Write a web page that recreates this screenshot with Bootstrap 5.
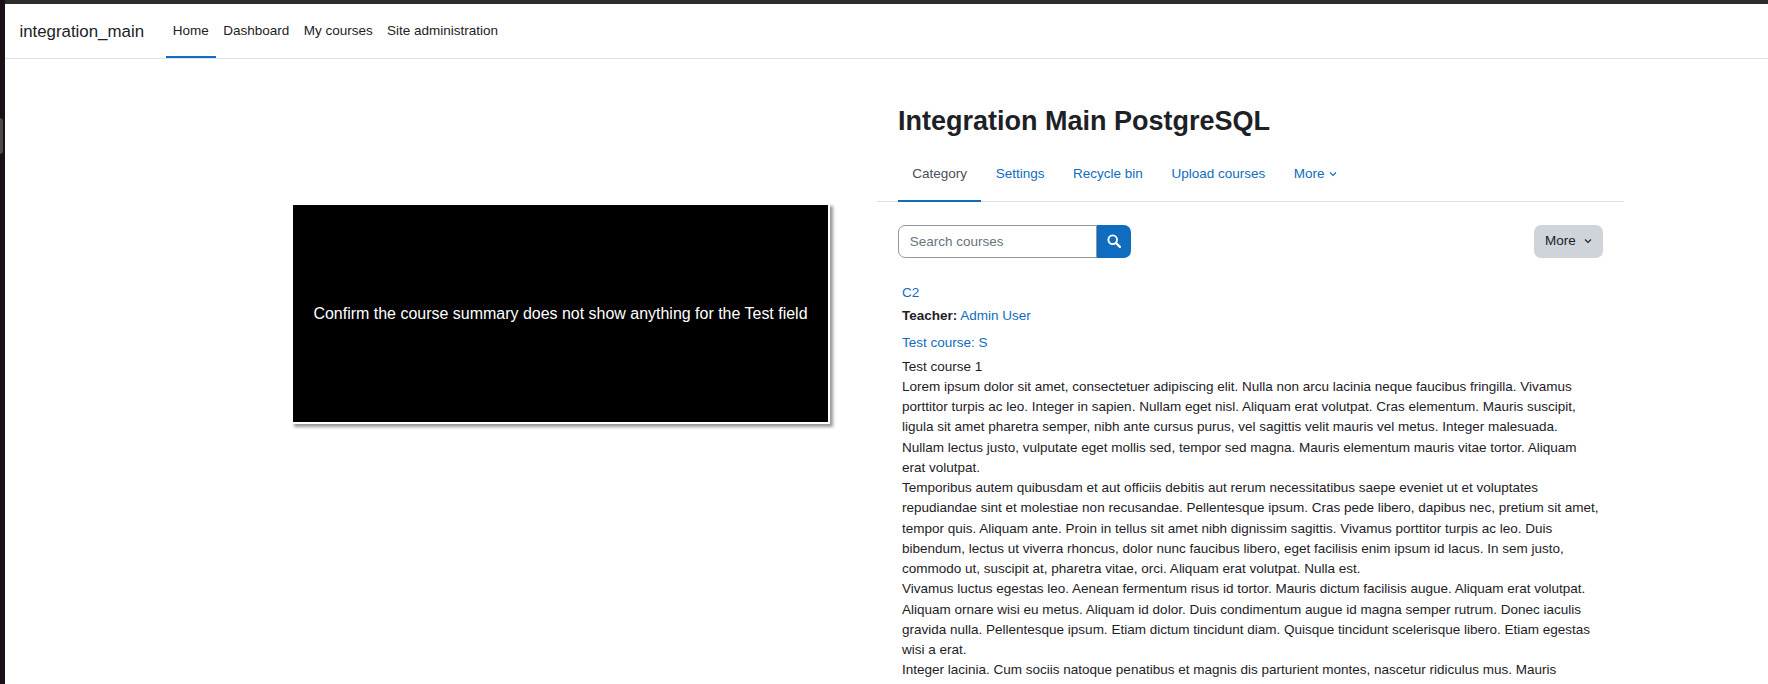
<!DOCTYPE html>
<html lang="en">
<head>
<meta charset="utf-8">
<title>Integration Main PostgreSQL</title>
<link href="https://cdn.jsdelivr.net/npm/bootstrap@5.3.0/dist/css/bootstrap.min.css" rel="stylesheet">
<style>
html,body{height:684px;overflow:hidden}
body{font-family:"Liberation Sans",Arial,sans-serif;font-size:13.5px;line-height:1.5;color:#1d2125;background:#1a1118;position:relative}
a{color:#0f6cbf;text-decoration:none}
.edge-handle{position:absolute;left:0;top:118px;width:3px;height:36px;background:#4d474a;border-radius:0 3px 3px 0}
.shell{margin-left:5px;background:#fff;height:684px;overflow:hidden;border-top:4px solid #2c2c2c}
.topbar{height:55px;padding-left:14.4px;border-bottom:1px solid #dee2e6;background:#fff}
.site-name{font-size:16.875px;color:#1d2125;margin-right:21.6px;line-height:25px}
.prim-link{display:flex;align-items:center;height:54px;padding:2px 7.2px 0;color:#1d2125;border-bottom:2px solid transparent}
.prim-link.current{border-bottom-color:#0f6cbf}
.left-side{width:286px;flex:none}
.slide-col{width:586px;flex:none;padding-top:144px}
.slide{width:539px;height:221px;background:#000;color:#fff;font-size:15.98px;border:2px solid #fff;box-sizing:border-box;box-shadow:3px 3px 3px #9a9a9a}
.main-col{width:747px;flex:none}
.page-title{font-size:27px;font-weight:700;line-height:1.2;margin:0;padding:46px 0 0 21px;color:#1d2125}
.sec-tabs{margin-top:8.6px;padding-left:21px;border-bottom:1px solid #dee2e6;height:56px}
.sec-tab{display:flex;align-items:center;height:56px;padding:2px 14.3px 0;color:#0f6cbf;white-space:nowrap;border-bottom:2px solid transparent}
.sec-tab.current{color:#495057;border-bottom-color:#0f6cbf}
.chev{margin-left:4px}
.tools{padding:23px 21px 0}
.search-box{width:233px;height:33px}
.search-box .form-control{font-size:13.5px;border:1px solid #8f959e;border-radius:7.2px 0 0 7.2px;padding:0 10.8px;height:33px;color:#495057;box-shadow:none}
.search-box .form-control::placeholder{color:#6a737b;opacity:1}
.search-go{width:34px;height:33px;background:#0f6cbf;border:0;border-radius:0 7.2px 7.2px 0;padding:0}
.more-btn{width:69px;height:33px;background:#ced4da;border:0;border-radius:7.2px;padding:0;font-size:13.5px;color:#1d2125;gap:8px}
.course-list{padding:25px 21px 0 25px}
.course-list p{margin:0}
.course-list p.teacher{margin-top:3px}
.course-list p.test-link{margin-top:7px}
.course-list p.first-line{margin-top:3px}
</style>
</head>
<body>
<div class="edge-handle"></div>
<div class="shell">
  <nav class="topbar d-flex align-items-center">
    <a class="site-name" href="#">integration_main</a>
    <div class="d-flex align-items-stretch">
      <a class="prim-link current" href="#">Home</a>
      <a class="prim-link" href="#">Dashboard</a>
      <a class="prim-link" href="#">My courses</a>
      <a class="prim-link" href="#">Site administration</a>
    </div>
  </nav>
  <div class="d-flex">
    <div class="left-side"></div>
    <div class="slide-col">
      <div class="slide d-flex align-items-center justify-content-center">Confirm the course summary does not show anything for the Test field</div>
    </div>
    <div class="main-col">
      <h1 class="page-title">Integration Main PostgreSQL</h1>
      <div class="sec-tabs d-flex">
        <a class="sec-tab current" href="#">Category</a>
        <a class="sec-tab" href="#">Settings</a>
        <a class="sec-tab" href="#">Recycle bin</a>
        <a class="sec-tab" href="#">Upload courses</a>
        <a class="sec-tab" href="#">More<svg class="chev" width="8" height="6" viewBox="0 0 8 6"><path d="M1 1.5l3 3 3-3" fill="none" stroke="currentColor" stroke-width="1.1"/></svg></a>
      </div>
      <div class="tools d-flex justify-content-between">
        <div class="search-box d-flex">
          <input class="form-control" type="text" placeholder="Search courses">
          <button class="search-go flex-shrink-0 d-flex align-items-center justify-content-center" type="button" aria-label="Search"><svg width="14" height="14" viewBox="0 0 14 14"><circle cx="5.7" cy="5.7" r="4.3" fill="none" stroke="#fff" stroke-width="1.9"/><path d="M8.9 8.9l4 4" stroke="#fff" stroke-width="2.2" stroke-linecap="round"/></svg></button>
        </div>
        <button class="more-btn d-flex align-items-center justify-content-center" type="button">More<svg width="8" height="6" viewBox="0 0 8 6"><path d="M1 1.5l3 3 3-3" fill="none" stroke="#1d2125" stroke-width="1.1"/></svg></button>
      </div>
      <div class="course-list">
        <p><a href="#">C2</a></p>
        <p class="teacher"><strong>Teacher:</strong> <a href="#">Admin User</a></p>
        <p class="test-link"><a href="#">Test course: S</a></p>
        <p class="first-line">Test course 1</p>
        <p>Lorem ipsum dolor sit amet, consectetuer adipiscing elit. Nulla non arcu lacinia neque faucibus fringilla. Vivamus porttitor turpis ac leo. Integer in sapien. Nullam eget nisl. Aliquam erat volutpat. Cras elementum. Mauris suscipit, ligula sit amet pharetra semper, nibh ante cursus purus, vel sagittis velit mauris vel metus. Integer malesuada. Nullam lectus justo, vulputate eget mollis sed, tempor sed magna. Mauris elementum mauris vitae tortor. Aliquam erat volutpat.</p>
        <p>Temporibus autem quibusdam et aut officiis debitis aut rerum necessitatibus saepe eveniet ut et voluptates repudiandae sint et molestiae non recusandae. Pellentesque ipsum. Cras pede libero, dapibus nec, pretium sit amet, tempor quis. Aliquam ante. Proin in tellus sit amet nibh dignissim sagittis. Vivamus porttitor turpis ac leo. Duis bibendum, lectus ut viverra rhoncus, dolor nunc faucibus libero, eget facilisis enim ipsum id lacus. In sem justo, commodo ut, suscipit at, pharetra vitae, orci. Aliquam erat volutpat. Nulla est.</p>
        <p>Vivamus luctus egestas leo. Aenean fermentum risus id tortor. Mauris dictum facilisis augue. Aliquam erat volutpat. Aliquam ornare wisi eu metus. Aliquam id dolor. Duis condimentum augue id magna semper rutrum. Donec iaculis gravida nulla. Pellentesque ipsum. Etiam dictum tincidunt diam. Quisque tincidunt scelerisque libero. Etiam egestas wisi a erat.</p>
        <p>Integer lacinia. Cum sociis natoque penatibus et magnis dis parturient montes, nascetur ridiculus mus. Mauris</p>
      </div>
    </div>
  </div>
</div>
<script src="https://cdn.jsdelivr.net/npm/bootstrap@5.3.0/dist/js/bootstrap.bundle.min.js"></script>
</body>
</html>
